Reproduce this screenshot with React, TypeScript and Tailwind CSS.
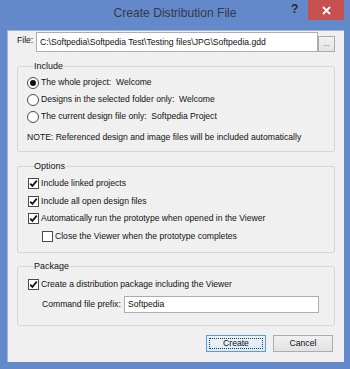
import React from 'react';

function Radio({ checked, label }: { checked?: boolean; label: string }) {
  return (
    <div className="flex h-[17px] items-center">
      <span className="flex h-[12px] w-[12px] items-center justify-center rounded-full border border-[#4a4a4a] bg-white">
        {checked && <span className="h-[6px] w-[6px] rounded-full bg-[#111]" />}
      </span>
      <span className="ml-[2px] whitespace-pre">{label}</span>
    </div>
  );
}

function Check({ checked, label, indent }: { checked?: boolean; label: string; indent?: boolean }) {
  return (
    <div className={`flex h-[17.5px] items-center ${indent ? 'pl-[15px]' : 'pl-[1px]'}`}>
      <span className="flex h-[11px] w-[11px] items-center justify-center border border-[#4a4a4a] bg-white">
        {checked && (
          <svg width="9" height="9" viewBox="0 0 9 9">
            <path d="M1.2 4.6 L3.4 6.9 L7.8 1.6" fill="none" stroke="#111" strokeWidth="1.7" />
          </svg>
        )}
      </span>
      <span className="ml-[2px] whitespace-pre">{label}</span>
    </div>
  );
}

function Group({ title, children, className }: { title: string; children: React.ReactNode; className?: string }) {
  return (
    <fieldset className={`rounded-[2px] border border-[#d6d6d6] ${className ?? ''}`}>
      <legend className="ml-[6px] h-[12px] px-[1px] leading-[12px] text-[9px]">{title}</legend>
      {children}
    </fieldset>
  );
}

export default function App() {
  return (
    <div className="relative flex h-[369px] w-[350px] flex-col bg-[#6389cb] font-['Liberation_Sans',Arial,sans-serif] text-[8.6px] text-[#111]">
      {/* title bar */}
      <div className="relative flex h-[30px] shrink-0 items-start justify-center">
        <span className="mt-[5px] text-[12.1px] leading-[16px] text-[#333a48]">Create Distribution File</span>
        <span className="absolute left-[291px] top-[1px] text-[12px] font-bold leading-[16px] text-[#2b2b2b]">?</span>
        <div className="absolute left-[308px] top-0 flex h-[20px] w-[36px] items-center justify-center bg-[#c75050]">
          <svg width="9" height="9" viewBox="0 0 9 9">
            <path d="M1 1 L8 8 M8 1 L1 8" stroke="#fff" strokeWidth="1.8" />
          </svg>
        </div>
      </div>

      {/* client area */}
      <div className="mb-[7px] ml-[7px] mr-[6px] flex flex-1 flex-col border-l border-t border-[#9fb4dc] bg-[#f0f0f0] px-[9px] pt-[1px]">
        <div className="flex h-[20px] items-end">
          <span className="mb-[5px] w-[19px]">File:</span>
          <div className="flex h-[20px] w-[282px] items-center border border-[#abadb3] bg-white pl-[3px]">
            C:\Softpedia\Softpedia Test\Testing files\JPG\Softpedia.gdd
          </div>
          <div className="flex h-[16px] w-[17px] items-center justify-center border border-[#acacac] bg-gradient-to-b from-[#f2f2f2] to-[#e3e3e3] text-[8px] leading-[8px] text-[#555]">
            ...
          </div>
        </div>

        <Group title="Include" className="mt-[8px] pb-[5px] pl-[9px] pt-[2px]">
          <Radio checked label="The whole project:  Welcome" />
          <Radio label="Designs in the selected folder only:  Welcome" />
          <Radio label="The current design file only:  Softpedia Project" />
          <div className="mt-[4px] flex h-[17px] items-center">NOTE: Referenced design and image files will be included automatically</div>
        </Group>

        <Group title="Options" className="mt-[8px] pb-[7px] pl-[9px] pt-[3px]">
          <Check checked label="Include linked projects" />
          <Check checked label="Include all open design files" />
          <Check checked label="Automatically run the prototype when opened in the Viewer" />
          <Check indent label="Close the Viewer when the prototype completes" />
        </Group>

        <Group title="Package" className="mt-[7px] pb-[12px] pl-[9px] pt-[4px]">
          <Check checked label="Create a distribution package including the Viewer" />
          <div className="mt-[2.5px] flex h-[17px] items-center pl-[15px]">
            <span className="w-[82px]">Command file prefix:</span>
            <div className="flex h-[17px] w-[195px] items-center border border-[#abadb3] bg-white pl-[3px]">Softpedia</div>
          </div>
        </Group>

        <div className="mt-[9px] flex justify-end gap-[7px] pr-[2px]">
          <div className="flex h-[17px] w-[60px] items-center justify-center border border-[#4e9ee8] bg-gradient-to-b from-[#ecf4fc] to-[#dbe9f7] p-[2px]">
            <div className="flex h-full w-full items-center justify-center border border-dotted border-[#333]">Create</div>
          </div>
          <div className="flex h-[17px] w-[60px] items-center justify-center border border-[#acacac] bg-gradient-to-b from-[#f0f0f0] to-[#e2e2e2]">Cancel</div>
        </div>
      </div>
    </div>
  );
}
